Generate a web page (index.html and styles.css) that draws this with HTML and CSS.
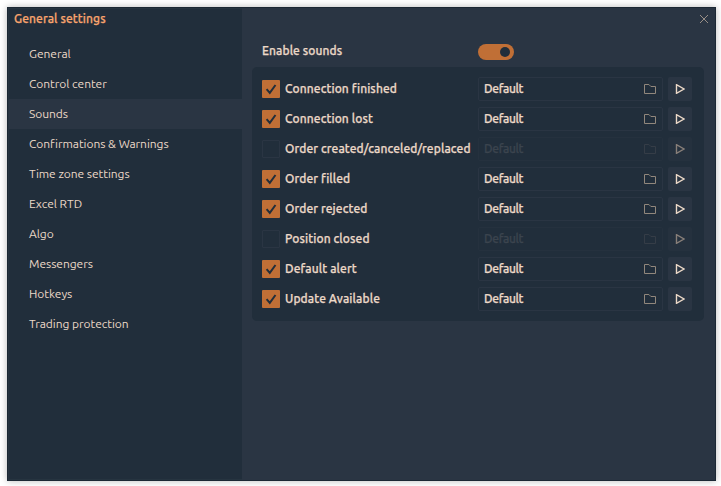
FILE: index.html
```html
<!DOCTYPE html>
<html lang="en">
<head>
<meta charset="utf-8">
<title>General settings</title>
<link rel="stylesheet" href="styles.css">
</head>
<body>
<svg class="defs" aria-hidden="true">
  <symbol id="check" viewBox="0 0 18 18"><path d="M4.6 9.2 7.8 12.9 13.5 5" fill="none" stroke="currentColor" stroke-width="2"/></symbol>
  <symbol id="folder" viewBox="0 0 14 12"><path d="M1.5 1.5h4.4l2 2h4.6v7h-11z" fill="none" stroke="currentColor" stroke-linejoin="round"/></symbol>
  <symbol id="play" viewBox="0 0 10 10"><path d="M1.5 .7v8.6L9 5z" fill="none" stroke="currentColor" stroke-width="1.4"/></symbol>
</svg>
<div class="window">
  <aside class="sidebar">
    <h1 class="title">General settings</h1>
    <nav class="menu">
      <a class="item">General</a>
      <a class="item">Control center</a>
      <a class="item active">Sounds</a>
      <a class="item">Confirmations &amp; Warnings</a>
      <a class="item">Time zone settings</a>
      <a class="item">Excel RTD</a>
      <a class="item">Algo</a>
      <a class="item">Messengers</a>
      <a class="item">Hotkeys</a>
      <a class="item">Trading protection</a>
    </nav>
  </aside>
  <main class="content">
    <div class="topbar"><svg class="close" viewBox="0 0 10 10"><path d="M1 1l8 8M9 1 1 9" fill="none" stroke="currentColor"/></svg></div>
    <div class="enable"><span class="enable-label">Enable sounds</span><span class="toggle"></span></div>
    <div class="panel">
      <div class="row"><span class="box on"><svg><use href="#check"/></svg></span><span class="label">Connection finished</span><span class="field">Default<svg><use href="#folder"/></svg></span><span class="play"><svg><use href="#play"/></svg></span></div>
      <div class="row"><span class="box on"><svg><use href="#check"/></svg></span><span class="label">Connection lost</span><span class="field">Default<svg><use href="#folder"/></svg></span><span class="play"><svg><use href="#play"/></svg></span></div>
      <div class="row off"><span class="box"></span><span class="label">Order created/canceled/replaced</span><span class="field">Default<svg><use href="#folder"/></svg></span><span class="play"><svg><use href="#play"/></svg></span></div>
      <div class="row"><span class="box on"><svg><use href="#check"/></svg></span><span class="label">Order filled</span><span class="field">Default<svg><use href="#folder"/></svg></span><span class="play"><svg><use href="#play"/></svg></span></div>
      <div class="row"><span class="box on"><svg><use href="#check"/></svg></span><span class="label">Order rejected</span><span class="field">Default<svg><use href="#folder"/></svg></span><span class="play"><svg><use href="#play"/></svg></span></div>
      <div class="row off"><span class="box"></span><span class="label">Position closed</span><span class="field">Default<svg><use href="#folder"/></svg></span><span class="play"><svg><use href="#play"/></svg></span></div>
      <div class="row"><span class="box on"><svg><use href="#check"/></svg></span><span class="label">Default alert</span><span class="field">Default<svg><use href="#folder"/></svg></span><span class="play"><svg><use href="#play"/></svg></span></div>
      <div class="row"><span class="box on"><svg><use href="#check"/></svg></span><span class="label">Update Available</span><span class="field">Default<svg><use href="#folder"/></svg></span><span class="play"><svg><use href="#play"/></svg></span></div>
    </div>
  </main>
</div>
</body>
</html>
```
FILE: styles.css
```css
* { box-sizing: border-box; }
body {
  margin: 0;
  padding: 7px 5px 5px 7px;
  height: 486px;
  overflow: hidden;
  background: #fff;
  font: 12px/18px Ubuntu, "Noto Sans", sans-serif;
  color: #ecd9c8;
}
.defs { position: absolute; width: 0; height: 0; }
.window {
  display: flex;
  width: 709px;
  height: 474px;
  border: 1px solid #1c2834;
  background: #2a3543;
  box-shadow: 0 0 7px rgba(0, 0, 0, .28);
}
.sidebar {
  width: 234px;
  border: 1px solid #263440;
  border-right: 0;
  background: #212e3b;
}
.title {
  margin: 0;
  height: 30px;
  padding: 1px 0 0 5px;
  font-size: 12px;
  line-height: 18px;
  font-weight: 500;
  letter-spacing: .1px;
  color: #f9a56e;
}
.menu { display: flex; flex-direction: column; letter-spacing: -.04px; }
.item { height: 30px; padding-left: 20px; line-height: 30px; }
.item.active { background: #2a3543; }
.content { flex: 1; padding-left: 10px; }
.topbar { display: flex; justify-content: flex-end; height: 27px; padding: 6px 6px 0 0; }
.close { width: 10px; height: 10px; color: #998f87; }
.enable { display: flex; align-items: flex-start; height: 32px; padding: 7px 0 0 10px; font-weight: 500; }
.enable-label { width: 216px; letter-spacing: .1px; }
.title, .enable, .panel { -webkit-text-stroke: .25px currentColor; }
.toggle {
  display: flex;
  justify-content: flex-end;
  width: 36px;
  height: 16px;
  margin-top: 2px;
  padding: 3px 4px;
  border-radius: 8px;
  background: #c06f36;
}
.toggle::before { content: ""; width: 10px; height: 10px; border-radius: 50%; background: #212e3b; }
.panel {
  display: flex;
  flex-direction: column;
  gap: 6px;
  width: 452px;
  padding: 10px 12px 10px 10px;
  border-radius: 5px;
  background: #212e3b;
  font-weight: 500;
}
.row { display: flex; align-items: center; height: 24px; }
.box { width: 18px; height: 18px; border: 1px solid #2a3543; border-radius: 1px; }
.box.on { border: 0; background: #c06f36; color: #212e3b; }
.box svg { display: block; width: 18px; height: 18px; }
.label { width: 198px; padding-left: 5px; white-space: nowrap; letter-spacing: .1px; }
.field {
  display: flex;
  align-items: center;
  justify-content: space-between;
  width: 185px;
  height: 24px;
  padding: 0 5px;
  border: 1px solid #2a3543;
  border-radius: 2px;
  letter-spacing: -.35px;
}
.field svg { width: 14px; height: 12px; color: #91877c; }
.play {
  display: grid;
  place-items: center;
  width: 24px;
  height: 24px;
  margin-left: 5px;
  border-radius: 2px;
  background: #2a3543;
}
.play svg { width: 10px; height: 10px; }
.off .field { border-color: #25313e; color: #3b444e; }
.off .field svg { color: #353d47; }
.off .play { background: #25313e; color: #887f79; }
```
